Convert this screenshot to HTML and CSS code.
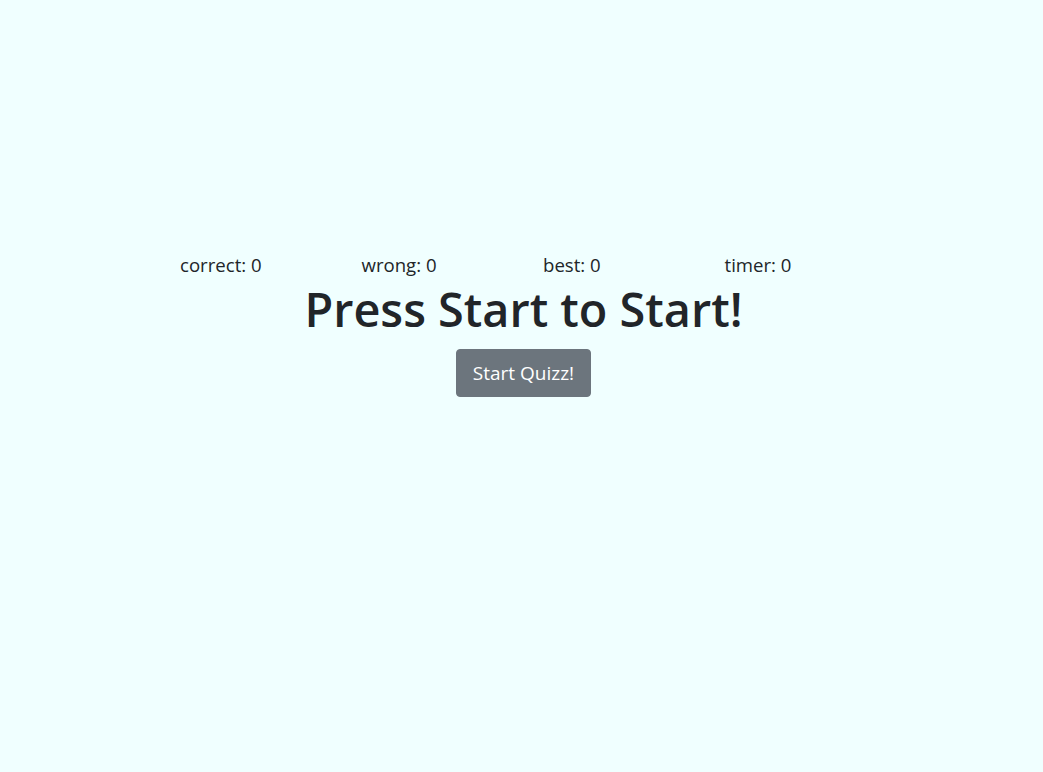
FILE: index.html
```html
<!DOCTYPE html>
<html lang="en">
<head>
<meta charset="utf-8">
<title>Quizz</title>
<link rel="stylesheet" href="styles.css">
</head>
<body>
<main class="quiz">
  <div class="stats">
    <div class="stat">correct: 0</div>
    <div class="stat">wrong: 0</div>
    <div class="stat">best: 0</div>
    <div class="stat">timer: 0</div>
  </div>
  <h1 class="title">Press Start to Start!</h1>
  <div class="actions">
    <button class="btn-start" type="button">Start Quizz!</button>
  </div>
</main>
</body>
</html>
```

FILE: styles.css
```css
html, body {
  margin: 0;
  padding: 0;
}
body {
  background: #f0ffff;
  color: #212529;
  font-family: "Open Sans", "Noto Sans", sans-serif;
  min-height: 772px;
}
.quiz {
  padding-top: 252px;
  display: flex;
  flex-direction: column;
}
.stats {
  display: grid;
  grid-template-columns: repeat(4, 181.5px);
  margin-left: 180px;
  font-size: 18.6px;
  line-height: 26px;
}
.title {
  margin: 2px 0 0;
  text-align: center;
  font-size: 46.8px;
  font-weight: 600;
  line-height: 58px;
  padding-left: 4px;
}
.actions {
  display: flex;
  justify-content: center;
  padding-left: 4px;
  margin-top: 11px;
}
.btn-start {
  font-family: inherit;
  font-size: 19px;
  line-height: 30px;
  padding: 8px 16px;
  border: 1px solid #6c757d;
  border-radius: 4px;
  background: #6c757d;
  color: #fff;
}
```
